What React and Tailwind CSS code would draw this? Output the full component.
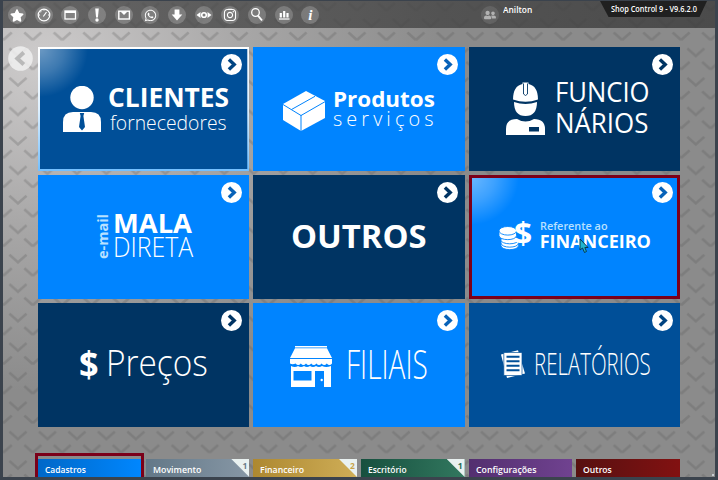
import { useLayoutEffect, useRef } from "react";
import { FaStar, FaWhatsapp, FaInstagram, FaUserFriends } from "react-icons/fa";

/* Text squeezed or stretched horizontally so that it fills its own box. */
function Fit({ className = "", children }) {
  const box = useRef(null);
  const text = useRef(null);
  useLayoutEffect(() => {
    const ratio = box.current.clientWidth / text.current.offsetWidth;
    text.current.style.transform = `scaleX(${ratio})`;
  }, []);
  return (
    <span ref={box} className={`block whitespace-nowrap ${className}`}>
      <span ref={text} className="inline-block origin-left align-top">
        {children}
      </span>
    </span>
  );
}

function Chevrons() {
  return (
    <svg className="absolute inset-0 h-full w-full" aria-hidden="true">
      <defs>
        <pattern id="chev" x="0.3" y="29" width="29.47" height="29.47" patternUnits="userSpaceOnUse">
          <g fill="none" stroke="#555" strokeOpacity="0.25" strokeWidth="2.700">
            <path d="M21 2.500l8.470 7.500M0 10l8.500-7.500" />
            <path d="M6.200 18.500l8.500 7.500 8.500-7.500" />
          </g>
        </pattern>
      </defs>
      <rect width="100%" height="100%" fill="url(#chev)" />
    </svg>
  );
}

function ArrowBadge({ ink }) {
  return (
    <svg className={`absolute top-[7px] right-[7px] h-[21px] w-[21px] ${ink}`} viewBox="0 0 21 21">
      <circle cx="10.500" cy="10.500" r="10.500" fill="#fff" />
      <path d="M7.900 5.500l5.300 5-5.300 5" fill="none" stroke="currentColor" strokeWidth="3.400" />
    </svg>
  );
}

const tones = {
  navy: { bg: "bg-[#003463]", ink: "text-[#003463]" },
  royal: { bg: "bg-[#004f98]", ink: "text-[#004482]" },
  azure: { bg: "bg-[#0084ff]", ink: "text-[#0862b8]" },
};

function Tile({ tone, className, glow, children }) {
  return (
    <div className={`relative flex items-start overflow-hidden text-white ${tones[tone].bg} ${className}`}>
      {glow && (
        <div className="absolute top-0 left-0 h-[50px] w-[50px] bg-[radial-gradient(circle_48px_at_2px_2px,rgba(255,255,255,0.42),rgba(255,255,255,0.24)_50%,transparent_100%)]" />
      )}
      {children}
      <ArrowBadge ink={tones[tone].ink} />
    </div>
  );
}

const ClientIcon = () => (
  <svg className="mt-[39px] h-[46px] w-[38px] shrink-0" viewBox="0 0 38 46" fill="#fff">
    <circle cx="19" cy="11.500" r="11.700" />
    <path d="M0 46V36Q0 26 10 26H28Q38 26 38 36V46Z" />
    <path d="M16.800 27h4.400l-.8 3 1.600 11-3 3.500-3-3.500 1.600-11Z" fill="#004f98" />
  </svg>
);

const BoxIcon = () => (
  <svg className="mt-[44px] h-[40px] w-[42px] shrink-0" viewBox="0 0 42 40">
    <path d="M23 0L42 10V27L18 40 0 29V13Z" fill="#fff" />
    <path d="M0 13.500L18 24.500 42 10.700M18 24V40M8.500 18.500L32 5.300" fill="none" stroke="#0083fd" strokeWidth="1" />
  </svg>
);

const WorkerIcon = () => (
  <svg className="mt-[35px] h-[53px] w-[39px] shrink-0" viewBox="0 0 39 53">
    <path d="M7 17.500Q7 4 16.500 2V.5h6V2Q32 4 32 17.500Q19.500 22 7 17.500Z" fill="#fff" />
    <path d="M8 20Q19.500 24 31 20Q31 34 19.500 34Q8 34 8 20Z" fill="#fff" />
    <path d="M17.500 1.500V12q2 3 4 0V1.500" fill="none" stroke="#003463" strokeWidth="0.900" />
    <path d="M0 53V47Q0 37 11 37Q19.500 42 28 37Q39 37 39 47V53Z" fill="#fff" />
    <rect x="23" y="45" width="10" height="4.500" fill="#003463" />
  </svg>
);

const CoinsIcon = () => (
  <svg className="mt-[51px] h-[24px] w-[20px] shrink-0" viewBox="0 0 20 24">
    <g fill="#fff" stroke="#0083fd" strokeWidth="0.900">
      <path d="M2 17v2.500c0 5.500 17.500 5.500 17.500 0V16Z" />
      <path d="M2 14v3c0 5.500 17.500 5.500 17.500 0V14Z" />
      <ellipse cx="10.700" cy="14" rx="8.900" ry="3.800" />
      <path d="M0 5v4.500c0 5.500 17.500 5.500 17.500 0V5Z" />
      <ellipse cx="8.800" cy="4.800" rx="8.800" ry="4.300" />
    </g>
  </svg>
);

const ShopIcon = () => (
  <svg className="mt-[43px] h-[41px] w-[42px] shrink-0" viewBox="0 0 42 41" fill="#fff">
    <path d="M5 0h32v1.400H5ZM5 2.200h32L42 12H0Z" />
    <path d="M0 13h42v4.500q-2.600 3-5.200 0q-2.600 3-5.200 0q-2.600 3-5.200 0q-2.600 3-5.200 0q-2.600 3-5.200 0q-2.600 3-5.200 0q-2.600 3-5.200 0Q2.500 19 0 17.500Z" />
    <path fillRule="evenodd" d="M1 20q4 2 7 0 3 2 6 0 3 2 6 0 3 2 6 0 3 2 6 0 4 2 9 0V41H34V25H25V41H1ZM3.500 25V34.500H21.500V25Z" />
    <circle cx="31.700" cy="34" r="1.200" />
  </svg>
);

const ReportIcon = () => (
  <svg className="mt-[47px] h-[28px] w-[24px] shrink-0" viewBox="0 0 24 28">
    <path d="M0 4.500L17 .2 24 23.500 6 28Z" fill="#fff" />
    <path d="M2.800 2.500H21V25.500H2.800Z" fill="#fff" stroke="#004f98" strokeWidth="0.700" />
    <path d="M5.500 6.800H18.500M5.500 11.300H18.500M5.500 15.800H18.500M5.500 20.300H18.500" stroke="#004f98" strokeWidth="1.900" />
  </svg>
);

const Glyph = ({ children }) => (
  <svg viewBox="0 0 18 18" className="h-[18px] w-[18px]" fill="none" stroke="#fff" strokeWidth="1.500">
    {children}
  </svg>
);

const toolbar = [
  <FaStar className="h-[13px] w-[14px]" />,
  <Glyph>
    <circle cx="9" cy="9" r="5.800" strokeWidth="1.200" />
    <path d="M8.300 10.500L11.500 6M9 3.500v1M4 9h1M13 9h1M5.500 5.500l.7.700" strokeWidth="1.200" />
  </Glyph>,
  <Glyph>
    <rect x="4" y="5" width="10.500" height="8" strokeWidth="1.300" />
    <path d="M4 6h10.500" strokeWidth="2" />
  </Glyph>,
  <Glyph>
    <path d="M7.200 2.500h3.600L9.900 11.500H8.100Z" fill="#fff" stroke="none" />
    <circle cx="9" cy="14" r="1.700" fill="#fff" stroke="none" />
  </Glyph>,
  <Glyph>
    <rect x="3.800" y="5.200" width="10.600" height="7.800" strokeWidth="1.400" />
    <path d="M5.500 5.500h7L9 9Z" fill="#fff" stroke="none" />
  </Glyph>,
  <FaWhatsapp className="h-[13px] w-[13px]" />,
  <Glyph>
    <path d="M6.600 3.500h4.800v5h2.900L9 14.500 3.700 8.500h2.900Z" fill="#fff" stroke="none" />
  </Glyph>,
  <Glyph>
    <circle cx="9" cy="9" r="2.300" strokeWidth="1.600" />
    <path d="M5.500 6v6L1.500 9ZM12.500 6v6L16.500 9Z" fill="#fff" stroke="none" />
  </Glyph>,
  <FaInstagram className="h-[14px] w-[14px]" />,
  <Glyph>
    <circle cx="7.500" cy="6.500" r="3.800" strokeWidth="1.300" />
    <path d="M10 9.700l4 4.800" strokeWidth="1.900" />
  </Glyph>,
  <Glyph>
    <path d="M4 13h10.500" strokeWidth="1.200" />
    <path d="M5.800 7v4.500M9.200 5v6.500M12.500 7v4.500" strokeWidth="2.200" />
  </Glyph>,
  <span className="font-['Liberation_Serif',serif] text-[15px] leading-none font-bold italic">i</span>,
];

const tabs = [
  { name: "Cadastros", w: "w-[41px]", bg: "bg-linear-to-r from-[#0068c8] to-[#0087ff]" },
  { name: "Movimento", w: "w-[48px]", bg: "bg-linear-to-r from-[#637888] to-[#8797a5]", badge: "1", ink: "text-[#6b7d8a]" },
  { name: "Financeiro", w: "w-[44px]", bg: "bg-linear-to-r from-[#ad8830] to-[#cfae57]", badge: "2", ink: "text-[#c7a349]" },
  { name: "Escritório", w: "w-[39px]", bg: "bg-linear-to-r from-[#17503f] to-[#32785f]", badge: "1", ink: "text-[#286b54]" },
  { name: "Configurações", w: "w-[60px]", bg: "bg-linear-to-r from-[#532f6f] to-[#704290]" },
  { name: "Outros", w: "w-[29px]", bg: "bg-linear-to-r from-[#571010] to-[#821111]" },
];

export default function App() {
  return (
    <div className="h-[480px] w-[718px] overflow-hidden border-x-[3px] border-t border-b-[3px] border-[#3b434d] bg-[#8b8b8b] font-['Open_Sans',sans-serif]">
      <div className="relative flex h-full flex-col bg-[radial-gradient(ellipse_400px_330px_at_40px_60px,#cecccc,#a8a7a7_50%,#8b8b8b_100%)]">
        <Chevrons />

        <header className="relative flex h-[27px] shrink-0 items-start bg-linear-to-r from-[#4b4b4b]/80 via-[#484848]/80 to-[#3b3b3b]/80 text-white">
          <div className="flex gap-[8.680px] pt-[5px] pl-[5px]">
            {toolbar.map((icon, i) => (
              <div key={i} className="flex h-[18px] w-[18px] items-center justify-center rounded-full bg-white/20">
                {icon}
              </div>
            ))}
          </div>
          <div className="mt-[5px] ml-[162px] flex h-[18px] w-[18px] items-center justify-center rounded-full bg-white/10">
            <FaUserFriends className="h-[12px] w-[12px] text-white/50" />
          </div>
          <Fit className="mt-[3px] ml-[4px] w-[29px] text-[9.500px] leading-[12px] font-semibold">Anilton</Fit>
          <div className="mr-[8px] ml-auto flex h-[16px] w-[107px] justify-center bg-[#202020] [clip-path:polygon(0_0,100%_0,93%_100%,8%_100%)]">
            <Fit className="mt-[2px] w-[86px] text-[9.500px] leading-[12px] font-semibold">Shop Control 9 - V9.6.2.0</Fit>
          </div>
        </header>

        <svg className="absolute top-[45px] left-[5px] h-[25px] w-[25px]" viewBox="0 0 25 25">
          <circle cx="12.500" cy="12.500" r="12.300" fill="#f0f0f0" fillOpacity="0.85" />
          <path d="M15.800 6.500L9.300 12.500l6.500 6" fill="none" stroke="#b9b9b9" strokeWidth="4" />
        </svg>

        <main className="relative mt-[19px] ml-[35px] grid w-[642px] grid-cols-3 grid-rows-[124px_124px_124px] gap-[4px]">
          <Tile tone="royal" glow className="pl-[25px]">
            <ClientIcon />
            <div className="mt-[36px] ml-[7px]">
              <Fit className="w-[121px] text-[27px] leading-[27px] font-bold">CLIENTES</Fit>
              <Fit className="mt-[2px] ml-[2px] w-[117px] text-[21px] leading-[21px] font-light">fornecedores</Fit>
            </div>
            <svg className="absolute inset-0 h-full w-full" aria-hidden="true">
              <defs>
                <linearGradient id="edge" x2="0" y2="1">
                  <stop stopColor="#ffffff" />
                  <stop offset="0.500" stopColor="#dff1ff" />
                  <stop offset="1" stopColor="#74c0ff" />
                </linearGradient>
              </defs>
              <rect x="1" y="1" width="209.300" height="122" fill="none" stroke="url(#edge)" strokeWidth="2" />
            </svg>
          </Tile>

          <Tile tone="azure" className="pl-[30px]">
            <BoxIcon />
            <div className="mt-[40px] ml-[8px]">
              <Fit className="w-[102px] text-[22px] leading-[22px] font-bold">Produtos</Fit>
              <Fit className="w-[105px] text-[19.500px] leading-[20px] font-light tracking-[4px]">serviços</Fit>
            </div>
          </Tile>

          <Tile tone="navy" className="pl-[37px]">
            <WorkerIcon />
            <div className="mt-[31px] ml-[10px]">
              <Fit className="w-[95px] text-[27px] leading-[27px]">FUNCIO</Fit>
              <Fit className="mt-[4px] w-[93px] text-[27px] leading-[27px]">NÁRIOS</Fit>
            </div>
          </Tile>

          <Tile tone="azure" className="pl-[57px]">
            <span className="mt-[39px] w-[16px] rotate-180 text-[14.500px] leading-[16px] font-bold text-[#b9e1ff] [writing-mode:vertical-rl]">
              e-mail
            </span>
            <div className="mt-[36px] ml-[2px]">
              <Fit className="w-[79px] text-[27px] leading-[24px] font-bold">MALA</Fit>
              <Fit className="w-[80px] text-[27px] leading-[24px] font-light">DIRETA</Fit>
            </div>
          </Tile>

          <Tile tone="navy" className="pl-[38px]">
            <Fit className="mt-[44px] w-[136px] text-[33px] leading-[33px] font-bold">OUTROS</Fit>
          </Tile>

          <Tile tone="azure" glow className="pl-[30px]">
            <CoinsIcon />
            <Fit className="mt-[43px] ml-[-5px] w-[18px] text-[30px] leading-[30px] font-bold">$</Fit>
            <div className="mt-[45px] ml-[8px]">
              <Fit className="w-[68px] text-[11.500px] leading-[11px] font-semibold text-[#b9e1ff]">Referente ao</Fit>
              <Fit className="mt-[1px] w-[111px] text-[18px] leading-[18px] font-bold">FINANCEIRO</Fit>
            </div>
            <svg className="absolute top-[63px] left-[110px] h-[16px] w-[10px]" viewBox="0 0 10 16">
              <path d="M1 1V12l2.500-2 2 4.500 2-1L5.800 9.500H9Z" fill="#20b5cf" stroke="#073a50" strokeWidth="1" />
            </svg>
            <div className="absolute inset-0 border-[3px] border-[#7b0019]" />
          </Tile>

          <Tile tone="navy" className="pl-[41px]">
            <Fit className="mt-[43px] w-[20px] text-[36px] leading-[36px] font-bold">$</Fit>
            <Fit className="mt-[42px] ml-[7px] w-[102px] text-[36px] leading-[36px] font-light">Preços</Fit>
          </Tile>

          <Tile tone="azure" className="pl-[37px]">
            <ShopIcon />
            <Fit className="mt-[41px] ml-[14px] w-[82px] text-[40px] leading-[40px] font-light">FILIAIS</Fit>
          </Tile>

          <Tile tone="royal" className="pl-[32px]">
            <ReportIcon />
            <Fit className="mt-[44px] ml-[9px] w-[117px] text-[32px] leading-[32px] font-light">RELATÓRIOS</Fit>
          </Tile>
        </main>

        <nav className="relative mt-auto ml-[35px] grid h-[18px] w-[642px] grid-cols-6 gap-[4px] text-white">
          {tabs.map((t) => (
            <div key={t.name} className={`relative pt-[4px] pl-[7px] ${t.bg}`}>
              <Fit className={`text-[9.500px] leading-[13px] font-semibold ${t.w}`}>{t.name}</Fit>
              {t.badge && (
                <div className={`absolute top-0 right-0 h-[18px] w-[18px] bg-[#e9f1f0] pr-[2px] text-right text-[8.500px] leading-[14px] font-bold [clip-path:polygon(0_0,100%_0,100%_100%)] ${t.ink}`}>
                  {t.badge}
                </div>
              )}
            </div>
          ))}
          <div className="absolute top-[-6px] left-[-3px] h-[27px] w-[109px] border-[3px] border-[#7b0019]" />
        </nav>

        <svg className="absolute right-[-3px] bottom-[-3px] h-[10px] w-[10px]" viewBox="0 0 10 10" fill="#c9cdd2">
          <path d="M1 7h2v2H1ZM4 7h2v2H4ZM7 7h2v2H7ZM4 4h2v2H4ZM7 4h2v2H7ZM7 1h2v2H7Z" />
        </svg>
      </div>
    </div>
  );
}
